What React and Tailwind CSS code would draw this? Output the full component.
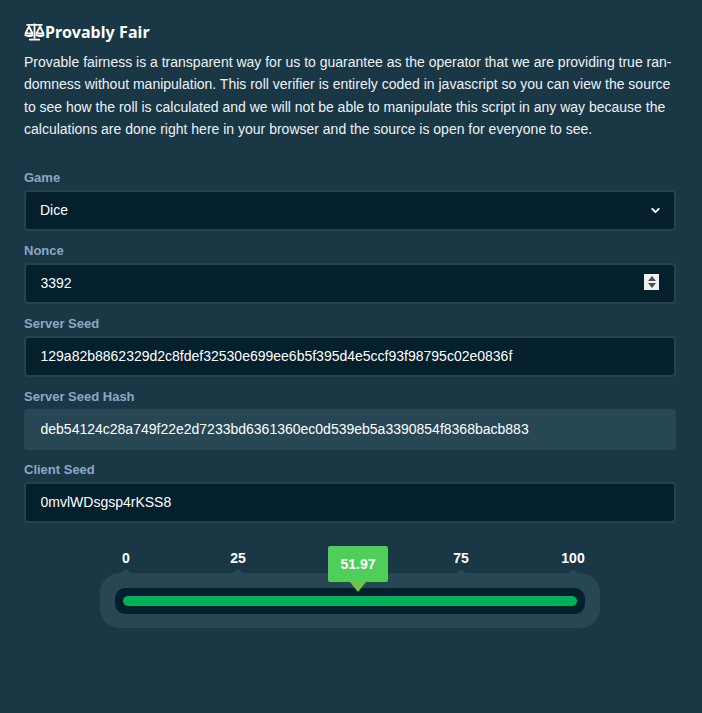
import React from 'react';
import { ChevronDown } from 'lucide-react';

const labelClass = 'block text-[13px] font-bold leading-[16px] text-[#8ea6c6] mb-[4px]';
const controlClass = 'block w-full h-[41px] rounded-[4px] border-2 border-[#27424f] bg-[#05202d] text-[14px] text-white outline-none';

const Field = ({ label, value, disabled }) => (
  <div className="mb-[12px]">
    <label className={labelClass}>{label}</label>
    <input
      readOnly
      value={value}
      className={
        disabled
          ? 'block w-full h-[41px] rounded-[4px] border-2 border-[#284755] bg-[#284755] px-[14.5px] text-[14px] text-white outline-none'
          : `${controlClass} px-[14.5px]`
      }
    />
  </div>
);

const ScaleIcon = () => (
  <svg width="21" height="18" viewBox="0 0 21 18" fill="none" stroke="white" strokeWidth="1.8" className="shrink-0">
    <path d="M2.5 1.8h16M10.5 0.5v15M5 16.6h11" />
    <path d="M5 3.5 1.5 10.5h7zM16 3.5l-3.5 7h7z" strokeLinejoin="round" />
    <path d="M1 11.5c.8 2 7 2 8 0M12 11.5c.8 2 7 2 8 0" strokeWidth="2" />
  </svg>
);

const marks = [
  { label: '0', left: 'left-[0px]' },
  { label: '25', left: 'left-[112px]' },
  { label: '75', left: 'left-[335px]' },
  { label: '100', left: 'left-[447px]' },
];

export default function App() {
  return (
    <div className="min-h-[713px] bg-[#1a3745] font-['Liberation_Sans',sans-serif] text-white pl-[24px] pr-[26px] pt-[20px]">
      <div className="flex items-center h-[24px]">
        <ScaleIcon />
        <h2 className="font-['Noto_Sans',sans-serif] text-[16px] font-bold leading-[24px] tracking-[0.08px] text-white">Provably Fair</h2>
      </div>
      <p className="mt-[7px] mb-[29px] w-[654px] text-[14px] leading-[22.4px] text-[#eef2f5] hyphens-manual">
        Provable fairness is a transparent way for us to guarantee as the operator that we are providing true ran&shy;domness without manipulation. This roll verifier is entirely coded in javascript so you can view the source to see how the roll is calculated and we will not be able to manipulate this script in any way because the calculations are done right here in your browser and the source is open for everyone to see.
      </p>

      <div className="mb-[12px]">
        <label className={labelClass}>Game</label>
        <div className="relative">
          <select className={`${controlClass} px-[14px] appearance-none`} defaultValue="Dice">
            <option>Dice</option>
          </select>
          <ChevronDown className="absolute right-[14px] top-[14px] w-[13px] h-[13px] text-white" strokeWidth={3.5} />
        </div>
      </div>

      <div className="mb-[12px]">
        <label className={labelClass}>Nonce</label>
        <div className="relative">
          <input readOnly value="3392" className={`${controlClass} px-[14.5px]`} />
          <div className="absolute right-[17px] top-[11px] flex flex-col items-center justify-center gap-[2px] w-[15px] h-[16px] bg-[#efefef]">
            <span className="w-0 h-0 border-x-[4px] border-x-transparent border-b-[5px] border-b-[#4d4d4d]" />
            <span className="w-0 h-0 border-x-[4px] border-x-transparent border-t-[5px] border-t-[#4d4d4d]" />
          </div>
        </div>
      </div>

      <Field label="Server Seed" value="129a82b8862329d2c8fdef32530e699ee6b5f395d4e5ccf93f98795c02e0836f" />
      <Field label="Server Seed Hash" value="deb54124c28a749f22e2d7233bd6361360ec0d539eb5a3390854f8368bacb883" disabled />
      <Field label="Client Seed" value="0mvlWDsgsp4rKSS8" />

      <div className="relative mx-auto mt-[50px] w-[500px] h-[55px] rounded-[20px] bg-[#284755] p-[15px]">
        {marks.map((m) => (
          <div key={m.label} className={`absolute -top-[24px] ${m.left} w-[52px] flex flex-col items-center`}>
            <span className="text-[14px] font-bold leading-[18px] text-white">{m.label}</span>
            <span className="mt-[2px] w-0 h-0 border-x-[6px] border-x-transparent border-b-[5px] border-b-[#284755]" />
          </div>
        ))}
        <div className="h-[26px] rounded-[10px] bg-[#05202d] p-[8px]">
          <div className="h-[10px] rounded-[5px] bg-[#00b15a]" />
        </div>
        <div className="absolute left-[228px] -top-[27px] flex flex-col items-center">
          <div className="w-[60px] h-[36px] rounded-[2px] bg-[#4fce59] flex items-center justify-center pt-[1px] text-[14px] font-bold text-white">51.97</div>
          <span className="w-0 h-0 border-x-[8px] border-x-transparent border-t-[10px] border-t-[#75bf4f]" />
        </div>
      </div>
    </div>
  );
}
